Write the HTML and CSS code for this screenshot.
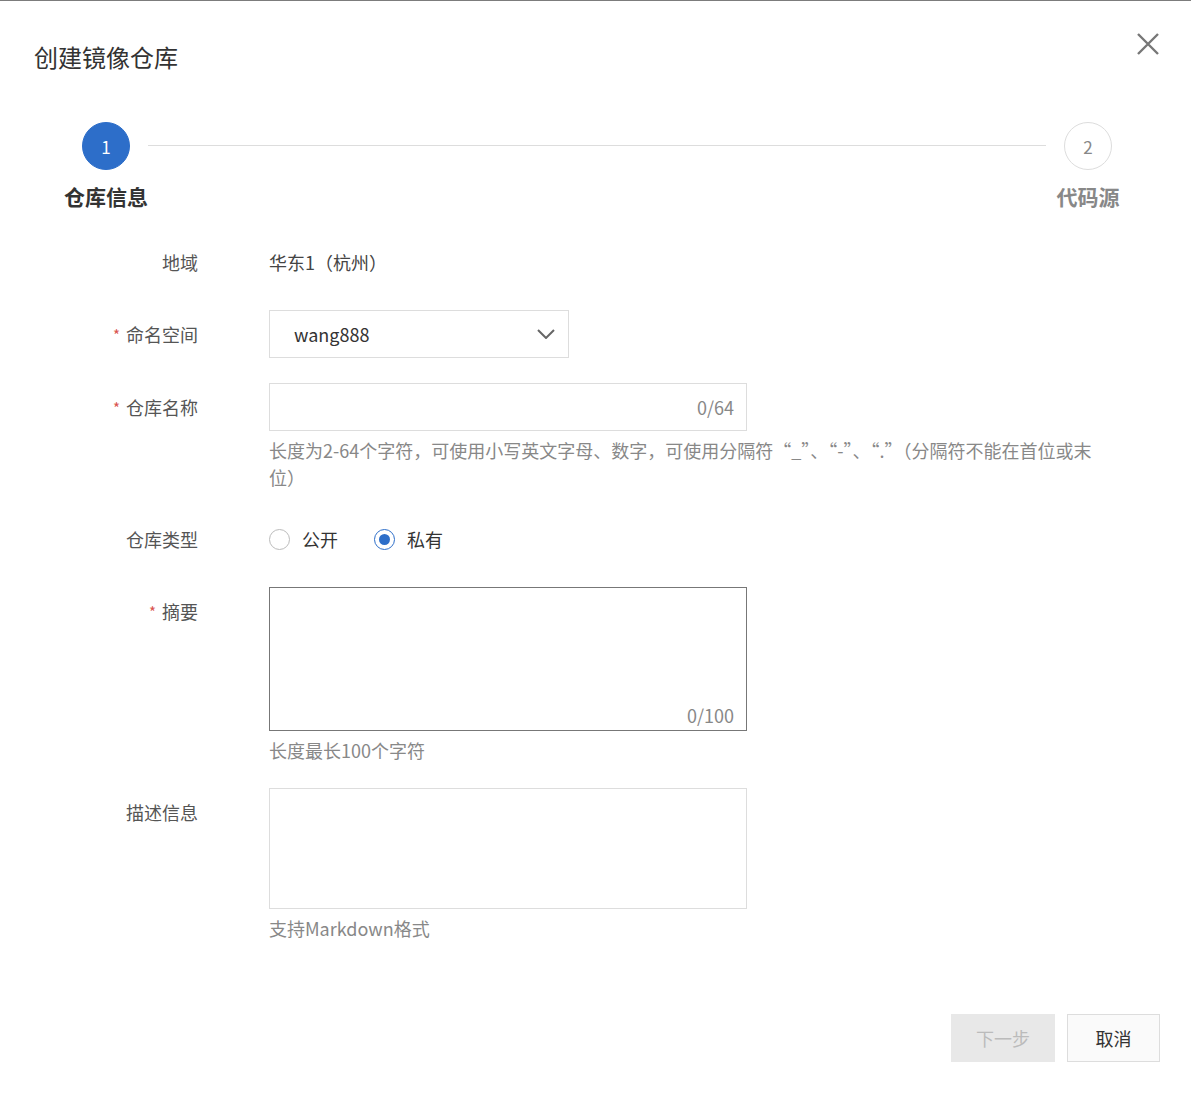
FILE: index.html
```html
<!DOCTYPE html>
<html lang="zh-CN">
<head>
  <meta charset="UTF-8">
  <meta name="viewport" content="width=device-width, initial-scale=1.0">
  <title>创建镜像仓库</title>
  <link rel="stylesheet" href="styles.css">
</head>
<body>
  <div class="dialog">
    <!-- 标题 -->
    <div class="dialog-header">
      <h1 class="dialog-title">创建镜像仓库</h1>
      <button class="close-btn" aria-label="关闭">
        <svg width="22" height="22" viewBox="0 0 22 22"><path d="M1 1 L21 21 M21 1 L1 21" stroke="#777" stroke-width="2.4" fill="none"/></svg>
      </button>
    </div>

    <!-- 步骤条 -->
    <div class="steps">
      <div class="step active">
        <div class="step-circle">1</div>
        <div class="step-label">仓库信息</div>
      </div>
      <div class="step-line"></div>
      <div class="step">
        <div class="step-circle">2</div>
        <div class="step-label">代码源</div>
      </div>
    </div>

    <!-- 表单 -->
    <div class="form">
      <div class="form-row">
        <div class="form-label">地域</div>
        <div class="form-field"><div class="static-text">华东1（杭州）</div></div>
      </div>

      <div class="form-row">
        <div class="form-label"><span class="required">*</span>命名空间</div>
        <div class="form-field">
          <div class="select">
            <span>wang888</span>
            <svg width="18" height="10" viewBox="0 0 18 10"><path d="M1 1 L9 9 L17 1" stroke="#666" stroke-width="2" fill="none"/></svg>
          </div>
        </div>
      </div>

      <div class="form-row">
        <div class="form-label"><span class="required">*</span>仓库名称</div>
        <div class="form-field">
          <div class="input">
            <span class="counter">0/64</span>
          </div>
          <div class="help">长度为2-64个字符，可使用小写英文字母、数字，可使用分隔符“_”、“-”、“.”（分隔符不能在首位或末位）</div>
        </div>
      </div>

      <div class="form-row">
        <div class="form-label">仓库类型</div>
        <div class="form-field">
          <div class="radios">
            <label class="radio"><span class="radio-dot"></span>公开</label>
            <label class="radio checked"><span class="radio-dot"></span>私有</label>
          </div>
        </div>
      </div>

      <div class="form-row">
        <div class="form-label"><span class="required">*</span>摘要</div>
        <div class="form-field">
          <div class="textarea focused">
            <span class="counter">0/100</span>
          </div>
          <div class="help">长度最长100个字符</div>
        </div>
      </div>

      <div class="form-row">
        <div class="form-label">描述信息</div>
        <div class="form-field">
          <div class="textarea short"></div>
          <div class="help">支持Markdown格式</div>
        </div>
      </div>
    </div>

    <!-- 底部按钮 -->
    <div class="dialog-footer">
      <button class="btn btn-disabled" disabled>下一步</button>
      <button class="btn btn-normal">取消</button>
    </div>
  </div>
</body>
</html>
```

FILE: styles.css
```css
body {
  margin: 0;
  padding: 0;
  background-color: #fff;
  color: #333;
  font-family: "Noto Sans CJK SC", "Microsoft YaHei", sans-serif;
}

.dialog {
  border-top: 1px solid #7c7c7c;
  height: 1097px;
  box-sizing: border-box;
}

.dialog-header {
  display: flex;
  justify-content: space-between;
  align-items: flex-start;
  padding: 37px 32px 0 34px;
}

.dialog-title {
  margin: 0;
  font-size: 24px;
  font-weight: normal;
  line-height: 38px;
  color: #333;
}

.close-btn {
  border: none;
  background: none;
  padding: 0;
  margin-top: -5px;
  cursor: pointer;
}

.close-btn svg {
  display: block;
}

/* 步骤条 */
.steps {
  display: flex;
  align-items: flex-start;
  margin-top: 46px;
  padding-left: 64px;
  width: 1066px;
}

.step {
  width: 84px;
  display: flex;
  flex-direction: column;
  align-items: center;
}

.step-circle {
  width: 46px;
  height: 46px;
  border-radius: 50%;
  border: 1px solid #ddd;
  color: #888;
  font-size: 17px;
  line-height: 1;
  display: flex;
  justify-content: center;
  align-items: center;
  background: #fff;
}

.step.active .step-circle {
  background-color: #2d6ec9;
  border-color: #2d6ec9;
  color: #fff;
}

.step-label {
  margin-top: 12px;
  font-size: 21px;
  font-weight: bold;
  line-height: 28px;
  color: #888;
  white-space: nowrap;
}

.step.active .step-label {
  color: #333;
}

.step-line {
  flex: 1;
  height: 1px;
  background-color: #ddd;
  margin-top: 23px;
}

/* 表单 */
.form {
  margin-top: 28px;
  padding-left: 34px;
}

.form-row {
  display: flex;
  margin-bottom: 24px;
}

.form-label {
  width: 164px;
  flex-shrink: 0;
  text-align: right;
  font-size: 18px;
  line-height: 48px;
  color: #555;
  margin-right: 71px;
}

.required {
  color: #d9534f;
  font-size: 15px;
  margin-right: 6px;
  vertical-align: 1px;
}

.form-field {
  width: 838px;
}

.static-text {
  font-size: 18px;
  line-height: 48px;
  color: #444;
}

.select {
  width: 300px;
  height: 48px;
  box-sizing: border-box;
  border: 1px solid #ddd;
  display: flex;
  align-items: center;
  justify-content: space-between;
  padding: 0 13px 0 24px;
  font-size: 18px;
  color: #333;
}

.input {
  width: 478px;
  height: 48px;
  box-sizing: border-box;
  border: 1px solid #ddd;
  display: flex;
  align-items: center;
  justify-content: flex-end;
  padding: 0 12px;
}

.counter {
  font-size: 18px;
  color: #888;
}

.textarea {
  width: 478px;
  height: 144px;
  box-sizing: border-box;
  border: 1px solid #ddd;
  display: flex;
  align-items: flex-end;
  justify-content: flex-end;
  padding: 0 12px 2px;
}

.textarea.focused {
  border-color: #777;
}

.textarea.short {
  height: 121px;
}

.help {
  margin-top: 6px;
  font-size: 18px;
  line-height: 27px;
  color: #888;
}

.radios {
  display: flex;
  align-items: center;
  height: 48px;
  gap: 36px;
}

.radio {
  display: flex;
  align-items: center;
  font-size: 18px;
  color: #333;
  cursor: pointer;
}

.radio-dot {
  width: 21px;
  height: 21px;
  box-sizing: border-box;
  border: 1px solid #bbb;
  border-radius: 50%;
  margin-right: 12px;
  position: relative;
}

.radio.checked .radio-dot {
  border-color: #2d6ec9;
}

.radio.checked .radio-dot::after {
  content: "";
  position: absolute;
  left: 4px;
  top: 4px;
  width: 11px;
  height: 11px;
  border-radius: 50%;
  background-color: #2d6ec9;
}

/* 底部 */
.dialog-footer {
  display: flex;
  justify-content: flex-end;
  gap: 12px;
  padding-right: 31px;
  margin-top: 72px;
}

.btn {
  height: 48px;
  box-sizing: border-box;
  font-family: inherit;
  font-size: 18px;
  padding: 0;
  cursor: pointer;
}

.btn-disabled {
  width: 104px;
  background-color: #e8e8e8;
  border: none;
  color: #bbb;
  cursor: not-allowed;
}

.btn-normal {
  width: 93px;
  background-color: #fafafa;
  border: 1px solid #ddd;
  color: #333;
}
```
